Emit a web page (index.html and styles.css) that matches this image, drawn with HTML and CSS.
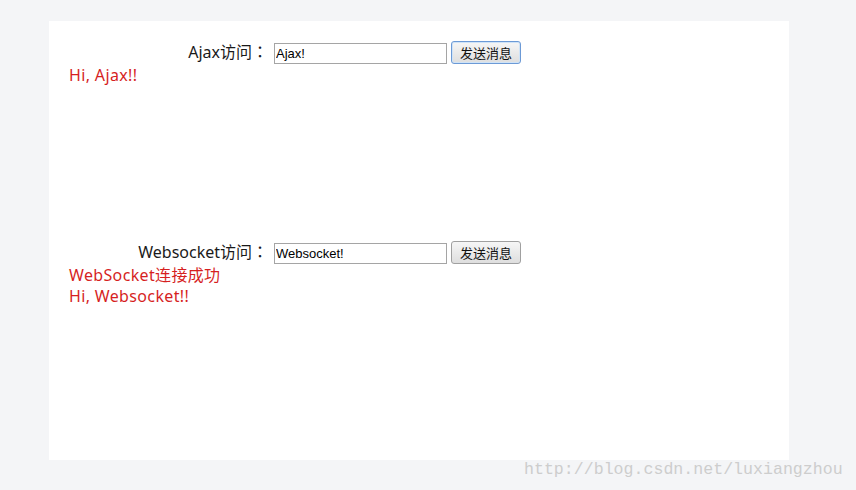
FILE: index.html
```html
<!DOCTYPE html>
<html>
<head>
<meta charset="utf-8">
<link rel="stylesheet" href="styles.css">
</head>
<body>
<div class="panel">
  <div class="section">
    <div class="row">
      <label class="label">Ajax访问：</label>
      <input class="field" type="text" value="Ajax!">
      <button class="btn btn-focus">发送消息</button>
    </div>
    <div class="msg">Hi, Ajax!!</div>
  </div>
  <div class="section">
    <div class="row">
      <label class="label">Websocket访问：</label>
      <input class="field" type="text" value="Websocket!">
      <button class="btn">发送消息</button>
    </div>
    <div class="msg">WebSocket连接成功</div>
    <div class="msg">Hi, Websocket!!</div>
  </div>
</div>
<div class="watermark">http://blog.csdn.net/luxiangzhou</div>
</body>
</html>
```
FILE: styles.css
```css
html, body {
  margin: 0;
  padding: 0;
  background: #f4f5f7;
  width: 856px;
  height: 490px;
  overflow: hidden;
  position: relative;
}
.panel {
  margin: 21px 0 0 49px;
  width: 740px;
  height: 439px;
  background: #ffffff;
  box-sizing: border-box;
  padding: 20px 0 0 20px;
  font-family: "Noto Sans", "Noto Sans CJK TC", sans-serif;
}
.section {
  height: 200px;
}
.row {
  display: flex;
  align-items: flex-end;
  height: 23px;
}
.label {
  width: 199px;
  text-align: right;
  font-size: 16px;
  color: #1a1a1a;
  margin-right: 6px;
  line-height: 23px;
}
.field {
  width: 173px;
  height: 21px;
  box-sizing: border-box;
  border: 1px solid #a5a5a5;
  padding: 0 1px;
  font-family: "Liberation Sans", Arial, sans-serif;
  font-size: 13px;
  color: #000;
  margin: 0 4px 0 0;
  outline: none;
}
.btn {
  width: 70px;
  height: 23px;
  box-sizing: border-box;
  border: 1px solid #a0a0a0;
  border-radius: 3px;
  background: linear-gradient(#f6f6f6, #dedede);
  font-family: "Noto Sans CJK SC", sans-serif;
  font-size: 13px;
  color: #111;
  padding: 0;
  margin: 0;
}
.btn-focus {
  border-color: #6c9ad6;
  box-shadow: inset 0 0 0 1px #cfe3f7;
}
.msg {
  font-size: 16px;
  line-height: 21px;
  color: #d61f1f;
  letter-spacing: 0.35px;
}
.section .row + .msg {
  margin-top: 1px;
}
.watermark {
  position: absolute;
  left: 524px;
  top: 458px;
  font-family: "Liberation Mono", monospace;
  font-size: 16.6px;
  color: #cdcdcd;
  line-height: 24px;
}
```
